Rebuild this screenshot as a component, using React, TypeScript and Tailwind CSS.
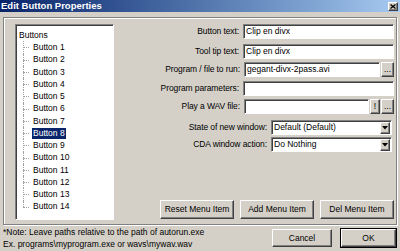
import React from "react";

const raised =
  "bg-[#d4d0c8] border border-t-white border-l-white border-b-[#404040] border-r-[#404040] shadow-[inset_-1px_-1px_0_#808080]";
const sunken =
  "bg-white border border-t-[#808080] border-l-[#808080] border-b-white border-r-white shadow-[inset_1px_1px_0_#404040]";

function Field({ value, w }: { value?: string; w: number }) {
  return (
    <div
      className={`${sunken} h-full flex items-center pl-[2px] text-black`}
      style={{ width: w }}
    >
      {value}
    </div>
  );
}

function SmallBtn({ label, w }: { label: string; w: number }) {
  return (
    <div
      className={`${raised} h-full flex items-center justify-center text-black leading-none`}
      style={{ width: w }}
    >
      {label}
    </div>
  );
}

function Select({ value }: { value: string }) {
  return (
    <div className={`${sunken} w-[121px] h-full flex items-center pl-[2px] pr-[1px]`}>
      <span className="flex-1 text-black">{value}</span>
      <div className={`${raised} w-[10px] h-[12px] flex items-center justify-center`}>
        <svg width="6" height="4" viewBox="0 0 6 4">
          <path d="M0 0h6L3 3.5z" fill="#000" />
        </svg>
      </div>
    </div>
  );
}

function Row({ label, mt, children }: { label: string; mt: number; children: React.ReactNode }) {
  return (
    <div className="flex items-center justify-end h-[15px] gap-[4px]" style={{ marginTop: mt }}>
      <span className="whitespace-nowrap text-black tracking-[-0.1px]">{label}</span>
      <div className="flex h-full gap-[1px]">{children}</div>
    </div>
  );
}

function Button({ label, w }: { label: string; w: number }) {
  return (
    <div
      className={`${raised} h-[19px] flex items-center justify-center text-black`}
      style={{ width: w }}
    >
      {label}
    </div>
  );
}

export default function App() {
  const items = Array.from({ length: 14 }, (_, i) => `Button ${i + 1}`);
  return (
    <div
      className="w-[400px] h-[251px] bg-[#d4d0c8] overflow-hidden flex flex-col text-[8.5px] leading-none"
      style={{ fontFamily: '"Liberation Sans", Arial, sans-serif' }}
    >
      {/* title bar */}
      <div className="h-[12px] flex items-center justify-between bg-gradient-to-r from-[#0a246a] to-[#a6caf0] pl-[1px] pr-[2px]">
        <span className="text-white font-bold text-[9.5px]">Edit Button Properties</span>
        <div className={`${raised} w-[10px] h-[9px] flex items-center justify-center`}>
          <svg width="6" height="5" viewBox="0 0 6 5">
            <path d="M0.5 0.5L5.5 4.5M5.5 0.5L0.5 4.5" stroke="#000" strokeWidth="1.3" />
          </svg>
        </div>
      </div>

      <div className="flex-1 flex flex-col pl-[3px] pr-[3px] pt-[5px]">
        {/* etched panel */}
        <div className="h-[208px] border border-[#808080] shadow-[inset_1px_1px_0_#fff,1px_1px_0_#fff] flex pl-[11px] pt-[6px] pr-[2px]">
          {/* tree */}
          <div className={`${sunken} w-[99px] h-[196px] pt-[4px] pl-[2px]`}>
            <div className="h-[12.25px] flex items-center pl-[1px] text-black">Buttons</div>
            <div className="flex flex-col">
              {items.map((it, i) => {
                const last = i === items.length - 1;
                const sel = it === "Button 8";
                return (
                  <div key={it} className="h-[12.25px] flex items-center">
                    <div className="relative w-[9px] h-full ml-[5px]">
                      <span
                        className={`absolute left-0 top-0 border-l border-dotted border-[#a0a0a0] ${last ? "h-1/2" : "h-full"}`}
                      />
                      <span className="absolute left-0 top-1/2 w-[6px] border-t border-dotted border-[#a0a0a0]" />
                    </div>
                    <span
                      className={`px-[1px] h-[11px] flex items-center ${sel ? "bg-[#0a246a] text-white" : "text-black"}`}
                    >
                      {it}
                    </span>
                  </div>
                );
              })}
            </div>
          </div>

          {/* form */}
          <div className="flex-1 flex flex-col">
            <Row label="Button text:" mt={0}>
              <Field value="Clip en divx" w={151} />
            </Row>
            <Row label="Tool tip text:" mt={5}>
              <Field value="Clip en divx" w={151} />
            </Row>
            <Row label="Program / file to run:" mt={3}>
              <Field value="gegant-divx-2pass.avi" w={136} />
              <SmallBtn label="..." w={13} />
            </Row>
            <Row label="Program parameters:" mt={4}>
              <Field w={151} />
            </Row>
            <Row label="Play a WAV file:" mt={3}>
              <Field w={125} />
              <SmallBtn label="!" w={10} />
              <SmallBtn label="..." w={13} />
            </Row>
            <div className="pr-[2px]">
              <Row label="State of new window:" mt={6}>
                <Select value="Default (Default)" />
              </Row>
              <Row label="CDA window action:" mt={2}>
                <Select value="Do Nothing" />
              </Row>
            </div>
            <div className="flex-1" />
            <div className="flex justify-end gap-[6px] mb-[5px]">
              <Button label="Reset Menu Item" w={74} />
              <Button label="Add Menu Item" w={74} />
              <Button label="Del Menu Item" w={74} />
            </div>
          </div>
        </div>

        {/* bottom */}
        <div className="flex items-center mt-[3px]">
          <div className="flex-1 flex flex-col gap-[3px] text-black text-[8.5px]">
            <span>*Note: Leave paths relative to the path of autorun.exe</span>
            <span>Ex. programs\myprogram.exe or wavs\mywav.wav</span>
          </div>
          <div className="flex gap-[8px] items-center">
            <div className={`${raised} w-[60px] h-[18px] flex items-center justify-center text-black`}>
              Cancel
            </div>
            <div className="border border-black">
              <div className={`${raised} w-[55px] h-[18px] flex items-center justify-center text-black`}>
                OK
              </div>
            </div>
          </div>
        </div>
      </div>
    </div>
  );
}
